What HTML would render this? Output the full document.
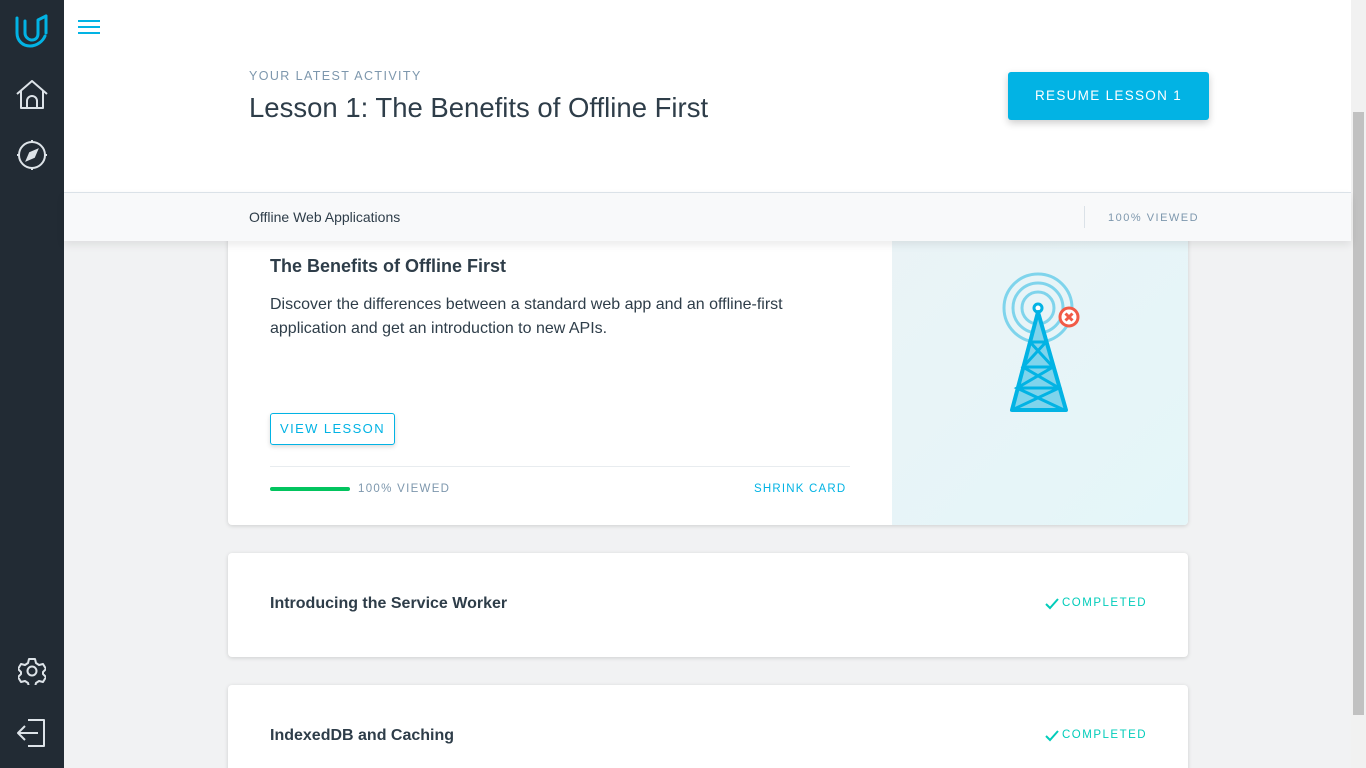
<!DOCTYPE html>
<html style="overflow:hidden;height:768px"><head><meta charset="utf-8"><style>
*{box-sizing:border-box;margin:0;padding:0}
body{width:1366px;height:768px;overflow:hidden;background:#f1f2f3;font-family:"Liberation Sans",sans-serif;position:relative;color:#2e3d49}
.side{position:absolute;left:0;top:0;width:64px;height:768px;background:#222b34}
.side svg{position:absolute}
.scroll{position:absolute;left:1351px;top:0;width:15px;height:768px;background:#f1f1f1}
.thumb{position:absolute;left:1353px;top:112px;width:11px;height:603px;background:#c1c1c1}
.head{position:absolute;left:64px;top:0;width:1287px;height:192px;background:#fff}
.sub{position:absolute;left:64px;top:192px;width:1287px;height:49px;background:#f8f9fa;border-top:1px solid #dbe2e8;box-shadow:0 4px 8px rgba(0,0,0,.08);z-index:3}
.card{position:absolute;left:228px;width:960px;background:#fff;border-radius:4px;box-shadow:0 1px 4px rgba(0,0,0,.15);overflow:hidden}
.cap{letter-spacing:1.6px;font-size:12px}
.done{position:absolute;left:816px;top:44px;color:#02ccba;font-size:11.5px;letter-spacing:1.5px}
</style></head><body>
<div class="side">
<svg style="left:14px;top:13px" width="36" height="36" viewBox="0 0 36 36" fill="none" stroke="#02b3e4" stroke-width="3" stroke-linejoin="round" stroke-linecap="round"><path d="M3 5v15c0 8 6 13 13 13 7 0 13-5 15-10"/><path d="M32 3l-8 4v14c0 4-3 6-6 6"/><path d="M32 3v17"/><path d="M11 8v12c0 3 2 6 6 7"/></svg>
<svg style="left:16px;top:80px" width="32" height="30" viewBox="0 0 32 30" fill="none" stroke="#dde3e8" stroke-width="2" stroke-linejoin="round"><path d="M1 14L16 1l15 13"/><path d="M5 11v17h22V11"/><path d="M11 28v-7a5 5 0 0 1 10 0v7"/></svg>
<svg style="left:16px;top:139px" width="32" height="32" viewBox="0 0 32 32" fill="none" stroke="#dde3e8" stroke-width="2"><circle cx="16" cy="16" r="13"/><path d="M16 1v3M16 28v3M1 16h3M28 16h3"/><path d="M21 11l-3 7-7 3 3-7z" fill="#dde3e8"/></svg>
<svg style="left:18px;top:657px" width="28" height="28" viewBox="0 0 28 28" fill="none" stroke="#dde3e8" stroke-width="2" stroke-linejoin="round"><path d="M11 2h6l1 4 3 2 4-1 3 5-3 3v2l3 3-3 5-4-1-3 2-1 4h-6l-1-4-3-2-4 1-3-5 3-3v-2l-3-3 3-5 4 1 3-2z"/><circle cx="14" cy="14" r="4.5"/></svg>
<svg style="left:16px;top:718px" width="32" height="30" viewBox="0 0 32 30" fill="none" stroke="#dde3e8" stroke-width="2" stroke-linejoin="round"><path d="M12 2h16v26H12"/><path d="M22 15H2M9 8l-7 7 7 7"/></svg>
</div>
<div class="head">
<svg style="position:absolute;left:14px;top:19px" width="22" height="16" viewBox="0 0 22 16" stroke="#02b3e4" stroke-width="2"><path d="M0 2h22M0 8h22M0 14h22"/></svg>
<div class="cap" style="position:absolute;left:185px;top:69px;color:#7d97ad;font-size:12.5px;letter-spacing:1.4px">YOUR LATEST ACTIVITY</div>
<div style="position:absolute;left:185px;top:92px;font-size:27.5px;color:#2e3d49">Lesson 1: The Benefits of Offline First</div>
<div class="cap" style="position:absolute;left:944px;top:72px;width:201px;height:48px;background:#02b3e4;color:#fff;border-radius:3px;text-align:center;line-height:48px;font-size:13.5px;letter-spacing:1.3px;box-shadow:0 3px 8px rgba(0,0,0,.2)">RESUME LESSON 1</div>
</div>
<div class="sub">
<div style="position:absolute;left:185px;top:16px;font-size:14px">Offline Web Applications</div>
<div style="position:absolute;left:1020px;top:13px;width:1px;height:22px;background:#dbe2e8"></div>
<div class="cap" style="position:absolute;left:1044px;top:19px;color:#7d97ad;font-size:11px;letter-spacing:1.5px">100% VIEWED</div>
</div>
<div class="card" style="top:220px;height:305px">
<div style="position:absolute;left:664px;top:0;width:296px;height:305px;background:linear-gradient(135deg,#eaf3f6,#e4f6f9)">
<svg style="position:absolute;left:104px;top:50px" width="90" height="145" viewBox="0 0 90 145" fill="none" stroke="#02b3e4">
<g stroke="#7fd4ec" stroke-width="3"><circle cx="42" cy="38" r="34"/><circle cx="42" cy="38" r="25"/><circle cx="42" cy="38" r="16"/></g>
<circle cx="42" cy="38" r="4" stroke-width="3" fill="#fff"/>
<path d="M42 42L16 140h54z" fill="#7fd4ec" stroke-width="4" stroke-linejoin="round"/>
<path d="M34 72h16M27 97h30M21 118h42M34 72l23 25-36 21 47 22M50 72L27 97l36 21-47 22" stroke-width="3"/>
<circle cx="73" cy="47" r="9" fill="#fff" stroke="#f15b47" stroke-width="3"/>
<path d="M69.5 43.5l7 7M76.5 43.5l-7 7" stroke="#f15b47" stroke-width="3"/>
</svg></div>
<div style="position:absolute;left:42px;top:36px;font-size:18px;font-weight:bold">The Benefits of Offline First</div>
<div style="position:absolute;left:42px;top:73px;width:560px;font-size:16px;line-height:24px;color:#2e3d49">Discover the differences between a standard web app and an offline-first application and get an introduction to new APIs.</div>
<div class="cap" style="position:absolute;left:42px;top:193px;width:125px;height:32px;border:1px solid #02b3e4;border-radius:3px;color:#02b3e4;text-align:center;line-height:30px;font-size:13px;letter-spacing:1.4px;box-shadow:0 2px 5px rgba(0,0,0,.15)">VIEW LESSON</div>
<div style="position:absolute;left:42px;top:246px;width:580px;height:1px;background:#e8ecef"></div>
<div style="position:absolute;left:42px;top:267px;width:80px;height:4px;border-radius:2px;background:#02c45f"></div>
<div class="cap" style="position:absolute;left:130px;top:263px;color:#7d97ad;font-size:11.5px;letter-spacing:1.3px">100% VIEWED</div>
<div class="cap" style="position:absolute;left:526px;top:263px;color:#02b3e4;font-size:11.5px;letter-spacing:1.2px">SHRINK CARD</div>
</div>
<div class="card" style="top:553px;height:104px">
<div style="position:absolute;left:42px;top:42px;font-size:16px;font-weight:bold">Introducing the Service Worker</div>
<svg style="position:absolute;left:817px;top:45px" width="14" height="12" viewBox="0 0 14 12" fill="none" stroke="#02ccba" stroke-width="2"><path d="M1 6l4 4 8-9"/></svg>
<div class="done" style="left:834px">COMPLETED</div>
</div>
<div class="card" style="top:685px;height:104px">
<div style="position:absolute;left:42px;top:42px;font-size:16px;font-weight:bold">IndexedDB and Caching</div>
<svg style="position:absolute;left:817px;top:45px" width="14" height="12" viewBox="0 0 14 12" fill="none" stroke="#02ccba" stroke-width="2"><path d="M1 6l4 4 8-9"/></svg>
<div class="done" style="left:834px">COMPLETED</div>
</div>
<div class="scroll"></div><div class="thumb"></div>
</body></html>
